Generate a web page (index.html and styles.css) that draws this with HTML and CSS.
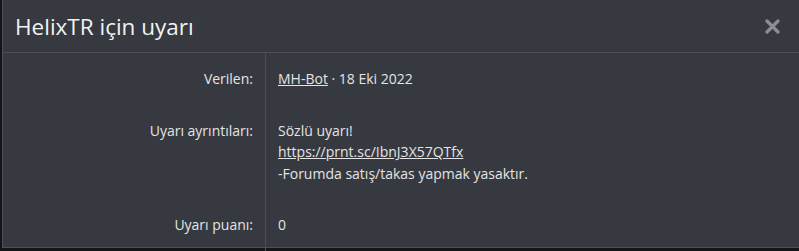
FILE: index.html
```html
<!DOCTYPE html>
<html lang="tr">
<head>
    <meta charset="UTF-8">
    <meta name="viewport" content="width=device-width, initial-scale=1.0">
    <title>HelixTR için uyarı</title>
    <link rel="stylesheet" href="styles.css">
</head>
<body>
    <div class="overlay">
        <div class="modal">
            <!-- Başlık -->
            <div class="modal-header">
                <h2 class="modal-title">HelixTR için uyarı</h2>
                <a class="modal-close" href="#" title="Kapat">
                    <svg width="15" height="15" viewBox="0 0 15 15">
                        <path d="M2 2 L13 13 M13 2 L2 13" stroke="currentColor" stroke-width="3.2" stroke-linecap="round"/>
                    </svg>
                </a>
            </div>

            <!-- Uyarı bilgileri -->
            <dl class="info-row">
                <dt>Verilen:</dt>
                <dd><a href="#">MH-Bot</a> · 18 Eki 2022</dd>
            </dl>
            <dl class="info-row">
                <dt>Uyarı ayrıntıları:</dt>
                <dd>
                    Sözlü uyarı!<br>
                    <a href="#">https://prnt.sc/IbnJ3X57QTfx</a><br>
                    -Forumda satış/takas yapmak yasaktır.
                </dd>
            </dl>
            <dl class="info-row">
                <dt>Uyarı puanı:</dt>
                <dd>0</dd>
            </dl>
        </div>
    </div>
</body>
</html>
```

FILE: styles.css
```css
body {
    margin: 0;
    padding: 0;
    background-color: #141518;
    font-family: "Open Sans", "Noto Sans", sans-serif;
    color: #e4e4e4;
}

.overlay {
    padding-left: 2px;
    height: 251px;
    overflow: hidden;
}

/* Pencere */
.modal {
    background-color: #363940;
    border-left: 1px solid #4d5058;
    border-bottom: 1px solid #4d5058;
    height: 247px;
}

.modal-header {
    display: flex;
    align-items: center;
    justify-content: space-between;
    height: 52px;
    padding: 0 19px 0 12px;
    border-bottom: 1px solid #4d5058;
}

.modal-title {
    margin: 0;
    font-size: 22.5px;
    font-weight: normal;
    color: #f2f2f2;
}

.modal-close {
    display: flex;
    color: #8b8e94;
}

/* Satırlar */
.info-row {
    display: flex;
    margin: 0;
    font-size: 14px;
    line-height: 21.5px;
}

.info-row dt {
    width: 250px;
    flex: none;
    padding: 15px 12px 15px 0;
    text-align: right;
    border-right: 1px solid #4d5058;
}

.info-row dd {
    flex: 1;
    margin: 0;
    padding: 15px 12px;
}

.info-row a {
    color: #e4e4e4;
    text-decoration: underline;
}
```
